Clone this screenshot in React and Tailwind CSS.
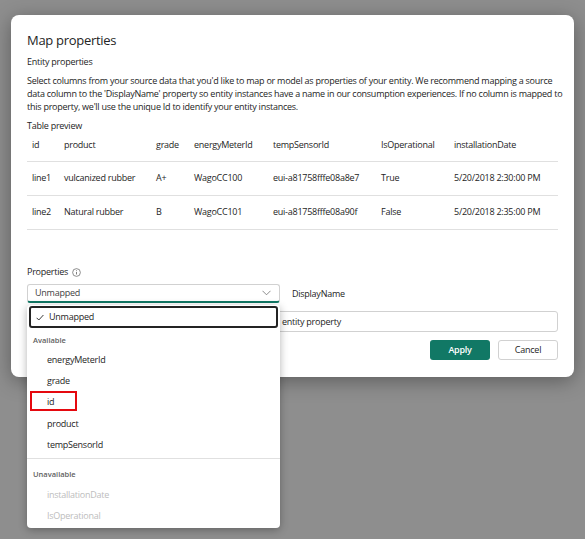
import React from 'react';

const columns = [
  { key: 'id', label: 'id', w: 'w-[32px]' },
  { key: 'product', label: 'product', w: 'w-[92px]' },
  { key: 'grade', label: 'grade', w: 'w-[38px]' },
  { key: 'energyMeterId', label: 'energyMeterId', w: 'w-[79px]' },
  { key: 'tempSensorId', label: 'tempSensorId', w: 'w-[108px]' },
  { key: 'IsOperational', label: 'IsOperational', w: 'w-[73px]' },
  { key: 'installationDate', label: 'installationDate', w: '' },
];

const rows = [
  {
    id: 'line1',
    product: 'vulcanized rubber',
    grade: 'A+',
    energyMeterId: 'WagoCC100',
    tempSensorId: 'eui-a81758fffe08a8e7',
    IsOperational: 'True',
    installationDate: '5/20/2018 2:30:00 PM',
  },
  {
    id: 'line2',
    product: 'Natural rubber',
    grade: 'B',
    energyMeterId: 'WagoCC101',
    tempSensorId: 'eui-a81758fffe08a90f',
    IsOperational: 'False',
    installationDate: '5/20/2018 2:35:00 PM',
  },
];

const available = ['energyMeterId', 'grade', 'id', 'product', 'tempSensorId'];
const unavailable = ['installationDate', 'IsOperational'];

// the description wraps at the same words as in the original dialog
const description = [
  "Select columns from your source data that you'd like to map or model as properties of your entity. We recommend mapping a source",
  "data column to the 'DisplayName' property so entity instances have a name in our consumption experiences. If no column is mapped to",
  "this property, we'll use the unique Id to identify your entity instances.",
];

function App() {
  return (
    <div
      className="min-h-[539px] w-[585px] bg-[#8e8e8e] pt-[15px] pl-[11px] text-[#242424] text-[9px] tracking-[-0.25px]"
      style={{ fontFamily: '"Open Sans", "Noto Sans", sans-serif' }}
    >
      <div className="relative w-[563px] h-[362px] bg-white rounded-[8px] shadow-[0_4px_20px_rgba(0,0,0,0.35)] px-4 pt-[15px]">
        <h1 className="text-[13px] font-medium leading-[20px] tracking-[-0.3px]">Map properties</h1>
        <h2 className="mt-[6px] leading-[12px]">Entity properties</h2>
        <p className="mt-[6px] leading-[13px] whitespace-nowrap">
          {description.map((line) => (
            <span key={line} className="block">{line}</span>
          ))}
        </p>
        <h2 className="mt-[7px] leading-[12px]">Table preview</h2>

        <div className="mt-[3px] w-[531px]">
          <div className="flex items-center h-[27px] pb-[6px] pl-[5px] border-b border-[#e0e0e0]">
            {columns.map((c) => (
              <div key={c.key} className={`${c.w} shrink-0`}>{c.label}</div>
            ))}
          </div>
          {rows.map((r) => (
            <div key={r.id} className="flex items-center h-[34px] pb-[2px] pl-[5px] border-b border-[#e0e0e0]">
              {columns.map((c) => (
                <div key={c.key} className={`${c.w} shrink-0`}>{r[c.key]}</div>
              ))}
            </div>
          ))}
        </div>

        <div className="mt-[36px] flex items-center gap-[4px] leading-[12px]">
          <span>Properties</span>
          <svg width="9" height="9" viewBox="0 0 10 10" className="text-[#616161]">
            <circle cx="5" cy="5" r="4.3" fill="none" stroke="currentColor" strokeWidth="0.8" />
            <line x1="5" y1="4.3" x2="5" y2="7.2" stroke="currentColor" strokeWidth="0.9" />
            <circle cx="5" cy="2.9" r="0.55" fill="currentColor" />
          </svg>
        </div>

        <div className="mt-[6px] flex items-center">
          <div className="w-[253px] h-[19px] border border-[#d1d1d1] border-b-2 border-b-[#117865] rounded-[3px] flex items-center justify-between pl-[7px] pr-[8px] text-[#424242]">
            <span>Unmapped</span>
            <svg width="9" height="6" viewBox="0 0 9 6">
              <path d="M0.5 0.8 L4.5 4.8 L8.5 0.8" fill="none" stroke="#707070" strokeWidth="0.8" />
            </svg>
          </div>
          <span className="ml-[12px]">DisplayName</span>
        </div>

        <div className="mt-[8px] w-[531px] h-[21px] border border-[#d1d1d1] rounded-[3px] flex items-center whitespace-nowrap">
          <span className="pl-[254px]">entity property</span>
        </div>

        <div className="mt-[8px] w-[531px] flex justify-end gap-[8px]">
          <button className="w-[60px] h-[20px] rounded-[3px] bg-[#117865] text-white font-semibold">Apply</button>
          <button className="w-[60px] h-[20px] rounded-[3px] border border-[#d1d1d1] bg-white">Cancel</button>
        </div>
      </div>

      <div className="absolute left-[27px] top-[305px] w-[253px] h-[223px] bg-white rounded-[4px] shadow-[0_2px_8px_rgba(0,0,0,0.3)]">
        <div className="mx-[2px] mt-[1px] h-[22px] border-2 border-[#242424] rounded-[3px] flex items-center pl-[5px]">
          <svg width="8" height="7" viewBox="0 0 8 7">
            <path d="M0.6 3.8 L2.8 6 L7.4 1" fill="none" stroke="#242424" strokeWidth="0.9" />
          </svg>
          <span className="ml-[5px]">Unmapped</span>
        </div>
        <div className="mt-[6px] pl-[6px] h-[14px] flex items-center text-[7.5px] font-semibold text-[#616161] tracking-normal">Available</div>
        <div className="mt-[1px]">
          {available.map((a) => (
            <div key={a} className="h-[21.25px] flex items-center pl-[20px]">
              {a === 'id' ? (
                <span className="relative">
                  {a}
                  <span className="absolute -left-[17px] -top-[4px] w-[47px] h-[20px] border-2 border-[#e5090f]" />
                </span>
              ) : (
                a
              )}
            </div>
          ))}
        </div>
        <div className="mt-[3px] border-t border-[#e0e0e0]" />
        <div className="mt-[8px] pl-[6px] h-[14px] flex items-center text-[7.5px] font-semibold text-[#616161] tracking-normal">Unavailable</div>
        <div className="mt-[3px]">
          {unavailable.map((a) => (
            <div key={a} className="h-[21px] flex items-center pl-[20px] text-[#bdbdbd]">{a}</div>
          ))}
        </div>
      </div>
    </div>
  );
}

export default App;
